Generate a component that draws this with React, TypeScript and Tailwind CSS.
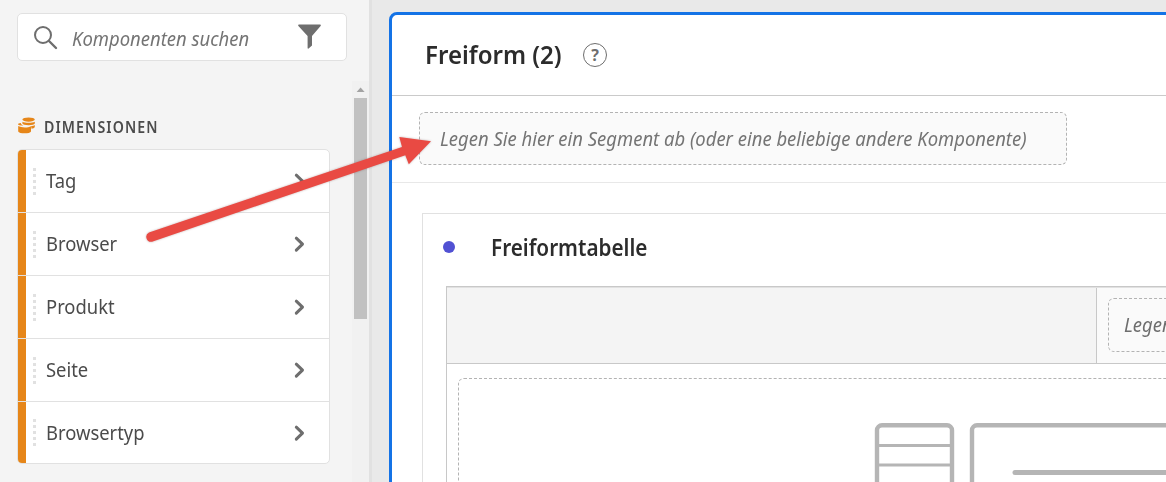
import React from "react";

const dimensions = ["Tag", "Browser", "Produkt", "Seite", "Browsertyp"];

function SearchBox() {
  return (
    <div className="ml-[17px] mt-[13px] flex h-12 w-[330px] shrink-0 items-center rounded-[5px] border border-[#e1e1e1] bg-white pl-4">
      <svg width="24" height="24" viewBox="0 0 24 24" fill="none" stroke="#6e6e6e" className="mt-[2px] shrink-0">
        <circle cx="9" cy="9" r="8" strokeWidth="2" />
        <path d="M15 15l7 7" strokeWidth="2.4" strokeLinecap="round" />
      </svg>
      <div className="ml-[14px] mt-[3px] w-[226px] whitespace-nowrap text-[20px] leading-6 italic text-[#747474]">
        <span className="inline-block origin-left scale-x-[0.924]">Komponenten suchen</span>
      </div>
      <svg width="24" height="26" viewBox="0 0 24 26" fill="#6e6e6e" className="mb-[1px] shrink-0">
        <path d="M.9.5h21.2c.8 0 1 .8.5 1.4L14 12.1v9.3l-3.4 3.2c-.4.3-1 .1-1-.5v-12L.4 1.9C-.1 1.3.2.5.9.5z" />
      </svg>
    </div>
  );
}

function DimensionRow({ label, last }: { label: string; last: boolean }) {
  return (
    <div className={last ? "flex h-[61px] items-center" : "flex h-[62px] items-center border-b border-[#e1e1e1] box-content"}>
      <div className="h-full w-2 shrink-0 bg-[#e68619]" />
      <div className="ml-[7px] flex w-[3px] flex-col gap-[3px]">
        {[0, 1, 2, 3, 4].map((n) => (
          <i key={n} className="h-[3px] w-[3px] bg-[#e1e1e1]" />
        ))}
      </div>
      <span className="ml-[10px] grow whitespace-nowrap text-[20px] leading-6 text-[#4b4b4b]">
        <span className="inline-block origin-left scale-x-[0.92]">{label}</span>
      </span>
      <svg width="12" height="18" viewBox="0 0 12 18" className="mr-[23px] shrink-0" fill="none" stroke="#6e6e6e" strokeWidth="3" strokeLinecap="round" strokeLinejoin="round">
        <path d="M2.3 3.2l6.2 6-6.2 6" />
      </svg>
    </div>
  );
}

function Sidebar() {
  return (
    <aside className="flex h-full w-[372px] shrink-0 flex-col border-r-[3px] border-[#e1e1e1] bg-[#f4f4f4]">
      <SearchBox />
      <div className="mt-5 flex min-h-0 grow">
        <div className="flex w-[352px] shrink-0 flex-col pl-[17px] pt-[35px]">
          <div className="flex h-5 items-center">
            <svg width="18" height="17" viewBox="0 0 18 17" fill="#e68619" className="mb-[2px] shrink-0">
              <ellipse cx="11.6" cy="2.6" rx="6.2" ry="2.1" />
              <path d="M5.4 4.8c2.7 1.4 9.7 1.4 12.4 0v1.7c-.5 2.2-11.9 2.2-12.4 0z" />
              <path d="M1.2 9.1c3 1.7 9.8 1.8 12.8.1v5.2c-.8 2.6-12 2.6-12.8 0z" />
              <path d="M14 9.2c1.6-.1 3-.5 3.8-1.1v1.8c-.6 1-1.6 1.5-3.3 1.8z" />
              <path d="M3.8 6.1c-1.7.2-2.8.6-2.8 1.2 0 .7 2.2 1.2 5.4 1.3-1.5-.5-2.5-1.2-2.6-2.5z" />
            </svg>
            <h2 className="ml-[9px] mt-[2px] whitespace-nowrap text-[15.5px] leading-5 font-semibold tracking-[1.2px] text-[#4b4b4b]">
              <span className="inline-block origin-left scale-x-[0.915]">DIMENSIONEN</span>
            </h2>
          </div>
          <div className="mt-[13px] w-[313px] shrink-0 overflow-hidden rounded-[5px] border border-[#e1e1e1] bg-white">
            {dimensions.map((label, i) => (
              <DimensionRow key={label} label={label} last={i === dimensions.length - 1} />
            ))}
          </div>
        </div>
        <div className="flex w-[17px] flex-col items-center bg-[#f1f1f1]">
          <svg width="17" height="17" viewBox="0 0 17 17" className="shrink-0" fill="#a3a3a3">
            <path d="M4.6 11h8L8.6 6.6z" />
          </svg>
          <div className="mr-px h-[221px] w-[13px] bg-[#c1c1c1]" />
        </div>
      </div>
    </aside>
  );
}

function DashedFrame() {
  return (
    <div className="ml-[11px] mt-[14px] h-[200px] w-[800px] rounded-[6px] border border-dashed border-[#b3b3b3]">
      <svg width="340" height="70" viewBox="0 0 340 70" className="ml-[415px] mt-[43px]" fill="none" stroke="#b5b5b5">
        <rect x="3" y="3.3" width="75" height="100" rx="5" strokeWidth="4.4" />
        <path d="M3 23.5h75M3 43h75" strokeWidth="3" />
        <rect x="98" y="3.3" width="300" height="100" rx="5" strokeWidth="4.4" />
        <path d="M141 50.5h199" strokeWidth="5" strokeLinecap="round" />
      </svg>
    </div>
  );
}

function Panel() {
  return (
    <main className="mt-3 ml-[17px] flex h-[500px] w-[900px] shrink-0 flex-col rounded-tl-[8px] border-[3px] border-[#1473e6] bg-white">
      <header className="flex h-[81px] shrink-0 items-center border-b border-[#cacaca] pl-[33px]">
        <h1 className="mb-[2px] w-[158px] whitespace-nowrap text-[26px] leading-8 font-semibold text-[#2c2c2c]">
          <span className="inline-block origin-left scale-x-[0.925]">Freiform (2)</span>
        </h1>
        <span className="flex h-6 w-6 items-center justify-center rounded-full border-[1.5px] border-[#6e6e6e] text-[16px] leading-6 font-bold text-[#6e6e6e]">?</span>
      </header>
      <div className="h-[87px] shrink-0 border-b border-[#e8e8e8] pl-[27px] pt-4">
        <div className="flex h-[53px] w-[648px] items-center rounded-[6px] border border-dashed border-[#b3b3b3] bg-[#fafafa] pl-5 whitespace-nowrap text-[20px] italic text-[#747474]">
          <span className="inline-block origin-left scale-x-[0.923]">Legen Sie hier ein Segment ab (oder eine beliebige andere Komponente)</span>
        </div>
      </div>
      <section className="ml-[30px] mt-[30px] h-[300px] w-[850px] shrink-0 border border-[#e1e1e1]">
        <div className="flex h-[72px] items-center pl-5">
          <i className="mb-[6px] h-3 w-3 rounded-full bg-[#5151d3]" />
          <h2 className="ml-9 mb-[6px] whitespace-nowrap text-[23px] leading-8 font-semibold text-[#2c2c2c]">
            <span className="inline-block origin-left scale-x-[0.9]">Freiformtabelle</span>
          </h2>
        </div>
        <div className="ml-[23px] w-[830px] border-l border-t border-[#c8c8c8]">
          <div className="flex h-[77px] border-b border-t border-b-[#c8c8c8] border-t-[#e1e1e1]">
            <div className="w-[650px] shrink-0 border-r border-[#c8c8c8] bg-[#f4f4f4]" />
            <div className="grow bg-[#fafafa] pl-[11px] pt-[10px]">
              <div className="flex h-[54px] w-[648px] items-center rounded-[6px] border border-dashed border-[#b3b3b3] bg-[#fafafa] pl-[15px] whitespace-nowrap text-[20px] italic text-[#6e6e6e]">
                <span className="inline-block origin-left scale-x-[0.923]">Legen</span>
              </div>
            </div>
          </div>
          <DashedFrame />
        </div>
      </section>
    </main>
  );
}

export default function App() {
  return (
    <div className="relative flex h-[482px] w-[1166px] overflow-hidden bg-[#e9e9e9] font-['Noto_Sans',sans-serif]">
      <Sidebar />
      <Panel />
      <svg width="1166" height="482" viewBox="0 0 1166 482" className="pointer-events-none absolute left-0 top-0 drop-shadow-[0_0_1px_rgba(90,40,40,0.35)]" fill="#e94a43">
        <path d="M149 232.5L402 147 399.3 137 431 141.3 408.8 164.3 405.3 155.3 152 241.7A4.9 4.9 0 0 1 149 232.5z" />
      </svg>
    </div>
  );
}
